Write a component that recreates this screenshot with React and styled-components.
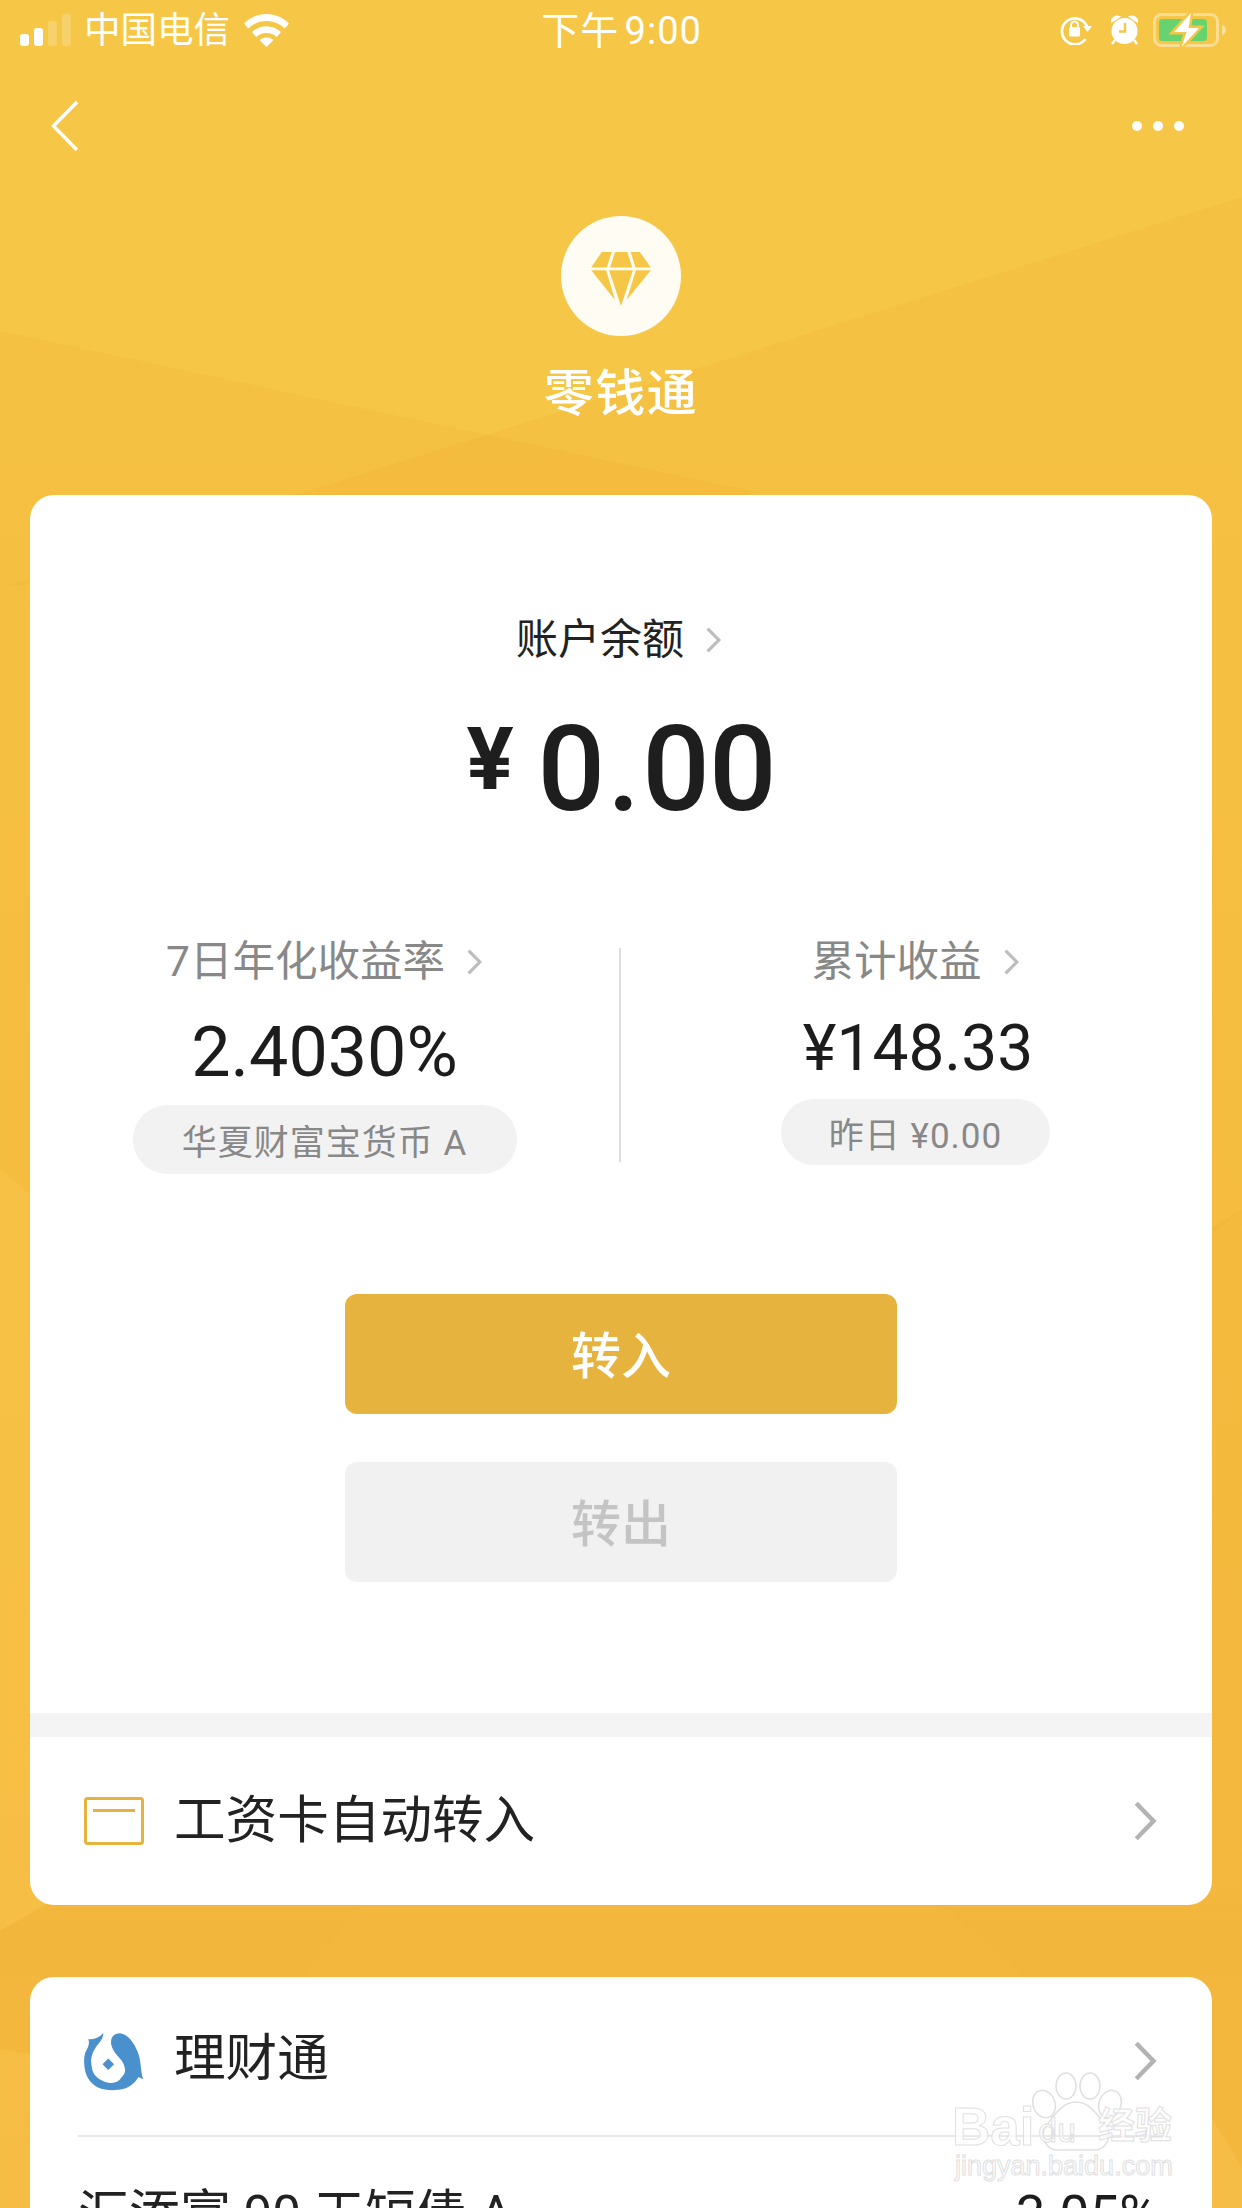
import React from 'react';
import styled, { createGlobalStyle } from 'styled-components';

const Global = createGlobalStyle`
  html, body { margin: 0; padding: 0; background: #F6C747; }
  body { font-family: Roboto, "Noto Sans CJK SC", sans-serif; }
  * { box-sizing: border-box; }
`;

const Page = styled.div`
  position: relative;
  width: 1242px;
  height: 2208px;
  overflow: hidden;
  background: linear-gradient(180deg, #F6C747 0%, #F6C647 20%, #F6C145 60%, #F6BD44 100%);
`;
const Backdrop = styled.svg`
  position: absolute;
  inset: 0;
`;
const Content = styled.div`
  position: relative;
  display: flex;
  flex-direction: column;
`;

/* status bar */
const StatusBar = styled.div`
  height: 60px;
  padding: 0 16px 0 20px;
  display: grid;
  grid-template-columns: 1fr auto 1fr;
  align-items: center;
  color: #fff;
`;
const StatusLeft = styled.div`
  display: flex;
  align-items: center;
`;
const Signal = styled.div`
  display: flex;
  align-items: flex-end;
  gap: 5px;
  height: 32px;
`;
const SignalBar = styled.span`
  width: 9px;
  height: ${p => p.$h}px;
  border-radius: 3px;
  background: ${p => (p.$dim ? 'rgba(255,255,255,0.2)' : '#fff')};
`;
const Carrier = styled.span`
  font-size: 36.5px;
  line-height: 44px;
  margin: 2px 14px 0 13px;
  font-weight: 400;
`;
const Clock = styled.span`
  font-size: 38px;
  line-height: 44px;
  padding-top: 2px;
  margin-right: 3px;
  font-weight: 400;
  letter-spacing: 1px;
  word-spacing: -5px;
`;
const StatusRight = styled.div`
  display: flex;
  align-items: center;
  justify-content: flex-end;
`;
const Glyph = styled.svg`
  display: block;
  flex: none;
  margin-right: ${p => p.$mr || 0}px;
`;

/* nav */
const Nav = styled.div`
  height: 132px;
  padding: 0 58px 0 51px;
  display: flex;
  align-items: center;
  justify-content: space-between;
`;
const Dots = styled.div`
  display: flex;
  gap: 11px;
`;
const Dot = styled.span`
  width: 10px;
  height: 10px;
  border-radius: 50%;
  background: #fff;
`;

/* header */
const Head = styled.div`
  padding-top: 24px;
  display: flex;
  flex-direction: column;
  align-items: center;
  margin-bottom: 71px;
`;
const Badge = styled.div`
  width: 120px;
  height: 120px;
  padding-top: 6px;
  border-radius: 50%;
  background: #FFFCF4;
  display: flex;
  align-items: center;
  justify-content: center;
`;
const Title = styled.h1`
  margin: 28px 0 0;
  font-size: 50px;
  line-height: 60px;
  font-weight: 500;
  color: #fff;
  letter-spacing: 1.5px;
`;

/* cards */
const Card = styled.section`
  margin: 0 30px ${p => p.$mb || 0}px;
  background: #fff;
  border-radius: 24px;
  overflow: hidden;
`;
const Summary = styled.div`
  padding-top: 125px;
  height: 1218px;
`;
const LabelRow = styled.div`
  display: flex;
  align-items: center;
  justify-content: center;
  gap: ${p => p.$gap}px;
  height: 40px;
  padding-right: ${p => p.$pr || 0}px;
  font-size: ${p => p.$size}px;
  line-height: 40px;
  color: ${p => p.$color};
  font-weight: 400;
`;
const BalanceRow = styled.div`
  margin-top: 45px;
  height: 130px;
  margin-bottom: -3px;
  display: flex;
  align-items: center;
  justify-content: center;
  gap: 24px;
  color: #1E1E1E;
`;
const BalanceYen = styled.span`
  font-size: 88px;
  line-height: 88px;
  font-weight: 700;
  margin-bottom: 22px;
`;
const BalanceAmount = styled.span`
  font-size: 119px;
  line-height: 130px;
  font-weight: 500;
  letter-spacing: -1px;
`;
const BalancePoint = styled.span`
  margin: 0 3px;
`;
const Stats = styled.div`
  margin-top: 110px;
  display: grid;
  grid-template-columns: 589px 2px 589px;
  align-items: start;
`;
const Divider = styled.div`
  margin-top: 6px;
  height: 214px;
  background: #DEDEDE;
`;
const Stat = styled.div`
  display: flex;
  flex-direction: column;
  align-items: center;
`;
const StatValue = styled.div`
  margin-top: ${p => p.$mt}px;
  height: 80px;
  padding-left: ${p => p.$pl || 0}px;
  font-size: ${p => p.$size}px;
  line-height: 80px;
  font-weight: 400;
  color: #1C1C1C;
`;
const Pill = styled.div`
  margin-top: ${p => p.$mt}px;
  width: ${p => p.$w}px;
  height: ${p => p.$h}px;
  border-radius: ${p => p.$h / 2}px;
  background: #F2F2F2;
  color: #888;
  font-size: 35px;
  font-weight: 400;
  display: flex;
  align-items: center;
  justify-content: center;
  letter-spacing: 1px;
`;
const Actions = styled.div`
  margin-top: 120px;
  display: flex;
  flex-direction: column;
  align-items: center;
  gap: 48px;
`;
const ActionButton = styled.button`
  width: 552px;
  height: 120px;
  border: 0;
  border-radius: 12px;
  padding: 0 0 5px;
  font-family: inherit;
  font-size: 50px;
  font-weight: 500;
  background: ${p => (p.$muted ? '#F1F1F1' : '#E6B33E')};
  color: ${p => (p.$muted ? '#C4C4C4' : '#fff')};
`;
const Strip = styled.div`
  height: 24px;
  background: #F4F4F4;
`;
const Row = styled.div`
  display: flex;
  align-items: center;
  height: 168px;
  padding: 0 54px;
`;
const ProductRow = styled.div`
  display: flex;
  align-items: center;
  margin: 6px 48px 0;
  height: 154px;
  padding: 3px 6px 0;
  border-bottom: 2px solid #E9E9E9;
`;
const RowText = styled.span`
  flex: 1;
  margin-left: 30px;
  font-size: 51.6px;
  line-height: 60px;
  font-weight: 400;
  color: #222;
`;
const ProductText = styled(RowText)`
  margin-bottom: 3px;
`;
const FundRow = styled.div`
  display: flex;
  justify-content: space-between;
  margin: 0 54px 0 48px;
  padding-top: 48px;
  font-size: 51px;
  line-height: 60px;
  font-weight: 400;
  color: #222;
`;
const FundRate = styled.span`
  font-size: 53px;
  font-weight: 400;
  color: #1C1C1C;
`;

/* watermark */
const Watermark = styled.div`
  position: absolute;
  left: 952px;
  top: 2072px;
  width: 230px;
  height: 112px;
  pointer-events: none;
  color: rgba(255,255,255,0.7);
  -webkit-text-stroke: 1px #E0E0E0;
`;
const WmPaw = styled.svg`
  position: absolute;
  left: 66px;
  top: 0;
`;
const WmBai = styled.span`
  position: absolute;
  left: 0;
  top: 28px;
  font-family: "Liberation Sans", sans-serif;
  font-size: 53px;
  line-height: 54px;
  font-weight: 700;
`;
const WmDu = styled.span`
  position: absolute;
  left: 86px;
  top: 41px;
  font-size: 34px;
  line-height: 34px;
`;
const WmCn = styled.span`
  position: absolute;
  left: 146px;
  top: 32px;
  font-size: 37px;
  line-height: 46px;
  font-weight: 700;
`;
const WmUrl = styled.span`
  position: absolute;
  left: 3px;
  top: 76px;
  font-family: "Liberation Sans", sans-serif;
  font-size: 27px;
  line-height: 36px;
  white-space: nowrap;
`;

const Chevron = ({ w = 16, h = 26, sw = 3.2, color = '#BDBDBD' }) => (
  <Glyph width={w} height={h} viewBox={`0 0 ${w} ${h}`} fill="none">
    <path d={`M${sw / 2} ${sw / 2} L${w - sw} ${h / 2} L${sw / 2} ${h - sw / 2}`} stroke={color} strokeWidth={sw} />
  </Glyph>
);

const Wifi = () => (
  <Glyph width="45" height="33" viewBox="0 0 45 33" fill="#fff">
    <path d="M0 9.500C6 3.500 14 0 22.500 0S39 3.500 45 9.500l-4.200 5C35.800 9.800 29.500 7 22.500 7S9.200 9.800 4.200 14.500z" />
    <path d="M8 18c3.800-3.600 9-5.800 14.500-5.800S33.200 14.400 37 18l-4.200 5c-2.700-2.500-6.300-4-10.300-4s-7.600 1.500-10.300 4z" />
    <path d="M15.500 26c1.900-1.600 4.300-2.500 7-2.500s5.100.9 7 2.500l-7 7z" />
  </Glyph>
);

const RotationLock = () => (
  <Glyph $mr={19} width="32" height="30" viewBox="0 0 32 30" fill="none">
    <path d="M27.500 13A13 13 0 1 0 25.500 24" stroke="#fff" strokeWidth="2.600" />
    <path d="M23 11h9l-4.500 6z" fill="#fff" />
    <path d="M11 12V10a3.500 3.500 0 0 1 7 0v2" stroke="#fff" strokeWidth="2" />
    <rect x="9" y="12" width="11" height="9.500" rx="1.500" fill="#fff" />
  </Glyph>
);

const Alarm = () => (
  <Glyph $mr={15} width="27" height="30" viewBox="0 0 27 30" fill="none">
    <circle cx="13.500" cy="16" r="13" fill="#fff" />
    <path d="M1 6a5 5 0 0 1 6-4L1 6zM26 6a5 5 0 0 0-6-4l6 4z" fill="#fff" stroke="#fff" strokeWidth="2.500" />
    <path d="M4 25l-3 4M23 25l3 4" stroke="#fff" strokeWidth="2.500" />
    <path d="M14 8v8.500H8" stroke="#F6C747" strokeWidth="2.400" />
  </Glyph>
);

const Battery = () => (
  <Glyph width="73" height="34" viewBox="0 0 73 34" fill="none">
    <rect x="1.500" y="1.500" width="63" height="31" rx="7" stroke="rgba(255,255,255,0.4)" strokeWidth="3" />
    <rect x="6" y="6" width="48" height="22" rx="3.500" fill="#66D36E" />
    <path d="M69 12c2.500.5 4 2.500 4 5s-1.500 4.500-4 5z" fill="rgba(255,255,255,0.45)" />
    <path d="M38 0 21 19h12.500L28.500 34 46 15H35.500z" fill="#fff" stroke="#F6C747" strokeWidth="5" paintOrder="stroke" />
  </Glyph>
);

const Diamond = () => (
  <Glyph width="60" height="54" viewBox="273 185 180 163" fill="#F6C747">
    <path d="M305 185h30l-15 47h-47zM345 185h37l15 47h-67zM392 185h28l33 47h-46z" />
    <path d="M273 240h45l27 90zM327 240h72l-36 108zM408 240h45l-73 90z" />
  </Glyph>
);

const CardIcon = () => (
  <Glyph width="60" height="48" viewBox="0 0 60 48" fill="none">
    <rect x="1.500" y="1.500" width="57" height="45" rx="2" stroke="#E6B33E" strokeWidth="3" />
    <rect x="9" y="12" width="42" height="3" fill="#E6B33E" />
  </Glyph>
);

const FundLogo = () => (
  <Glyph width="60" height="60" viewBox="0 0 60 60">
    <path
      fill="#4A90CC"
      d="M4.300 8.300C10 8.500 16 6.500 19.300 1.700C19.500 5.500 18 9 15.300 11.700C12 15.500 9 20 7.700 25C6.500 30 7.500 35 8.500 39.500C10 45 16 50 24.300 51.700C30 52.500 34.500 51 37 47C40 44.500 41.500 41 41 38.300C40.500 33 38 30 35 26.500C31 22 27 17 27 11C27 6 30 2.500 36 2.300C42 3.500 46 7 49 12C53 18 56 25 56.500 33C57 37 57.500 44 59.300 48.300L54.300 46C51 52 46 56 39 58C32 59.500 22 60 14 56.500C7 53 2 46 .8 38C-.5 30 0 25 2 20C4 16 6 13 4.300 8.300Z"
    />
    <path fill="#4A90CC" d="M24.300 27.500l5.800 5.800-5.800 5.800-5.800-5.800z" />
  </Glyph>
);

const RowChevron = () => <Chevron w={24} h={40} sw={4.500} color="#B3B3B3" />;

export default function App() {
  return (
    <Page>
      <Global />
      <Backdrop width="1242" height="2208" viewBox="0 0 1242 2208">
        <g fill="#EB9A20">
          <polygon points="0,331 760,493 0,588" fillOpacity="0.1" />
          <polygon points="1242,197 0,588 0,1169 620,1700 1242,1210" fillOpacity="0.12" />
          <polygon points="1242,1210 0,1931 0,2049 900,2208 1242,2208" fillOpacity="0.18" />
          <polygon points="0,1931 47,1905 360,1905 304,1977 0,1977" fillOpacity="0.03" />
          <polygon points="941,1905 1025,1977 1242,1977 1242,1905" fillOpacity="0.03" />
        </g>
        <polygon points="1212,2118 1242,2168 1242,2208 1212,2208" fill="#F5BD45" />
      </Backdrop>
      <Content>
        <StatusBar>
          <StatusLeft>
            <Signal>
              <SignalBar $h={12} />
              <SignalBar $h={18} />
              <SignalBar $h={25} $dim />
              <SignalBar $h={32} $dim />
            </Signal>
            <Carrier>中国电信</Carrier>
            <Wifi />
          </StatusLeft>
          <Clock>下午 9:00</Clock>
          <StatusRight>
            <RotationLock />
            <Alarm />
            <Battery />
          </StatusRight>
        </StatusBar>
        <Nav>
          <Glyph width="28" height="52" viewBox="0 0 28 52" fill="none">
            <path d="M26 2 2.500 26 26 50" stroke="#fff" strokeWidth="3.500" />
          </Glyph>
          <Dots>
            <Dot />
            <Dot />
            <Dot />
          </Dots>
        </Nav>
        <Head>
          <Badge>
            <Diamond />
          </Badge>
          <Title>零钱通</Title>
        </Head>
        <Card $mb={72}>
          <Summary>
            <LabelRow $gap={22} $size={42} $color="#222" $pr={4}>
              账户余额
              <Chevron />
            </LabelRow>
            <BalanceRow>
              <BalanceYen>¥</BalanceYen>
              <BalanceAmount>0<BalancePoint>.</BalancePoint>00</BalanceAmount>
            </BalanceRow>
            <Stats>
              <Stat>
                <LabelRow $gap={22} $size={42.500} $color="#888">
                  7日年化收益率
                  <Chevron />
                </LabelRow>
                <StatValue $mt={30} $size={70}>2.4030%</StatValue>
                <Pill $mt={13} $w={384} $h={69}>华夏财富宝货币 A</Pill>
              </Stat>
              <Divider />
              <Stat>
                <LabelRow $gap={22} $size={42.500} $color="#888">
                  累计收益
                  <Chevron />
                </LabelRow>
                <StatValue $mt={27} $size={64} $pl={5}>¥148.33</StatValue>
                <Pill $mt={10} $w={269} $h={66}>昨日 ¥0.00</Pill>
              </Stat>
            </Stats>
            <Actions>
              <ActionButton>转入</ActionButton>
              <ActionButton $muted>转出</ActionButton>
            </Actions>
          </Summary>
          <Strip />
          <Row>
            <CardIcon />
            <RowText>工资卡自动转入</RowText>
            <RowChevron />
          </Row>
        </Card>
        <Card>
          <ProductRow>
            <FundLogo />
            <ProductText>理财通</ProductText>
            <RowChevron />
          </ProductRow>
          <FundRow>
            <span>汇添富 90 天短债 A</span>
            <FundRate>3.05%</FundRate>
          </FundRow>
        </Card>
      </Content>
      <Watermark>
        <WmPaw width="124" height="80" viewBox="0 0 124 80" fill="none" stroke="#E0E0E0" strokeWidth="1.500">
          <ellipse cx="26" cy="32" rx="11" ry="14" transform="rotate(-20 26 32)" />
          <ellipse cx="48" cy="14" rx="10" ry="13" />
          <ellipse cx="72" cy="14" rx="10" ry="13" />
          <ellipse cx="92" cy="32" rx="11" ry="14" transform="rotate(20 92 32)" />
          <path d="M58 30c14 0 22 14 30 24 6 8 2 24-12 24H40c-14 0-18-16-12-24 8-10 16-24 30-24z" />
        </WmPaw>
        <WmBai>Bai</WmBai>
        <WmDu>du</WmDu>
        <WmCn>经验</WmCn>
        <WmUrl>jingyan.baidu.com</WmUrl>
      </Watermark>
    </Page>
  );
}
